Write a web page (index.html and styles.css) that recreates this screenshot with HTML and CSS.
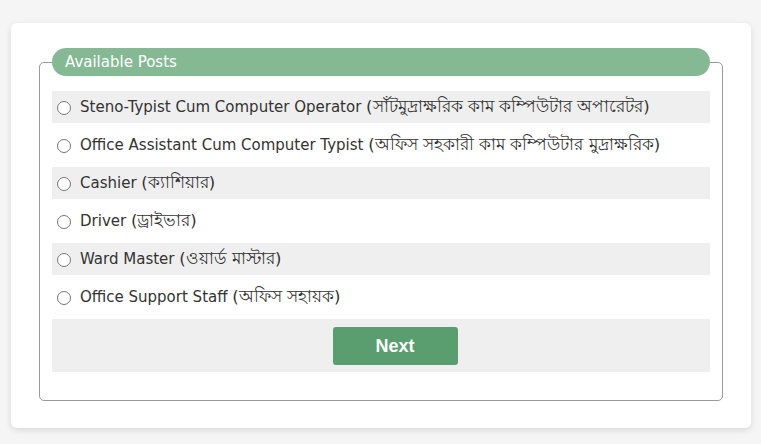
FILE: index.html
```html
<!DOCTYPE html>
<html lang="en">
<head>
<meta charset="utf-8">
<title>Available Posts</title>
<link rel="stylesheet" href="styles.css">
</head>
<body>
<div class="page">
  <form class="card">
    <fieldset class="posts">
      <legend class="posts-title">Available Posts</legend>
      <label class="post shaded"><input type="radio" name="post" class="radio"><span class="post-text">Steno-Typist Cum Computer Operator <span class="bn" lang="bn">(সাঁটমুদ্রাক্ষরিক কাম কম্পিউটার অপারেটর)</span></span></label>
      <label class="post"><input type="radio" name="post" class="radio"><span class="post-text">Office Assistant Cum Computer Typist <span class="bn" lang="bn">(অফিস সহকারী কাম কম্পিউটার মুদ্রাক্ষরিক)</span></span></label>
      <label class="post shaded"><input type="radio" name="post" class="radio"><span class="post-text">Cashier <span class="bn" lang="bn">(ক্যাশিয়ার)</span></span></label>
      <label class="post"><input type="radio" name="post" class="radio"><span class="post-text">Driver <span class="bn" lang="bn">(ড্রাইভার)</span></span></label>
      <label class="post shaded"><input type="radio" name="post" class="radio"><span class="post-text">Ward Master <span class="bn" lang="bn">(ওয়ার্ড মাস্টার)</span></span></label>
      <label class="post"><input type="radio" name="post" class="radio"><span class="post-text">Office Support Staff <span class="bn" lang="bn">(অফিস সহায়ক)</span></span></label>
      <div class="actions">
        <button type="button" class="next-btn">Next</button>
      </div>
    </fieldset>
  </form>
</div>
</body>
</html>
```

FILE: styles.css
```css
html, body {
  margin: 0;
  padding: 0;
  background: #f5f5f5;
}

body {
  font-family: "DejaVu Sans", Verdana, sans-serif;
  color: #333;
}

.page {
  padding: 23px 10px 15px 11px;
}

.card {
  background: #fff;
  border-radius: 6px;
  box-shadow: 0 2px 6px rgba(0, 0, 0, 0.12);
  padding: 25px 28px 27px 28px;
}

.posts {
  margin: 0;
  border: 1px solid #9a9a9a;
  border-radius: 5px;
  padding: 15px 12px 28px 12px;
  min-width: 0;
}

.posts-title {
  box-sizing: border-box;
  width: 100%;
  height: 28px;
  line-height: 29px;
  padding: 0 13px;
  background: #85b994;
  color: #fff;
  font-size: 15px;
  border-radius: 14px;
}

.post {
  display: flex;
  align-items: center;
  height: 32px;
  margin-bottom: 6px;
  font-size: 15px;
  cursor: pointer;
}

.post.shaded {
  background: #efefef;
}

.radio {
  -webkit-appearance: none;
  appearance: none;
  box-sizing: border-box;
  width: 14px;
  height: 14px;
  margin: 1px 9px 0 5px;
  border: 1px solid #767676;
  border-radius: 50%;
  background: #fff;
  flex: none;
}

.radio:checked {
  border: 4px solid #5a9e6f;
}

.post-text {
  white-space: nowrap;
}

.bn {
  font-size: 16.5px;
}

.actions {
  margin-top: 2px;
  height: 53px;
  background: #efefef;
  display: flex;
  align-items: center;
  justify-content: center;
  padding-left: 28px;
}

.next-btn {
  width: 125px;
  height: 38px;
  border: none;
  border-radius: 3px;
  background: #5a9e6f;
  color: #fff;
  font-family: "Liberation Sans", Arial, sans-serif;
  font-weight: bold;
  font-size: 18px;
  padding-top: 3px;
  cursor: pointer;
}
```
